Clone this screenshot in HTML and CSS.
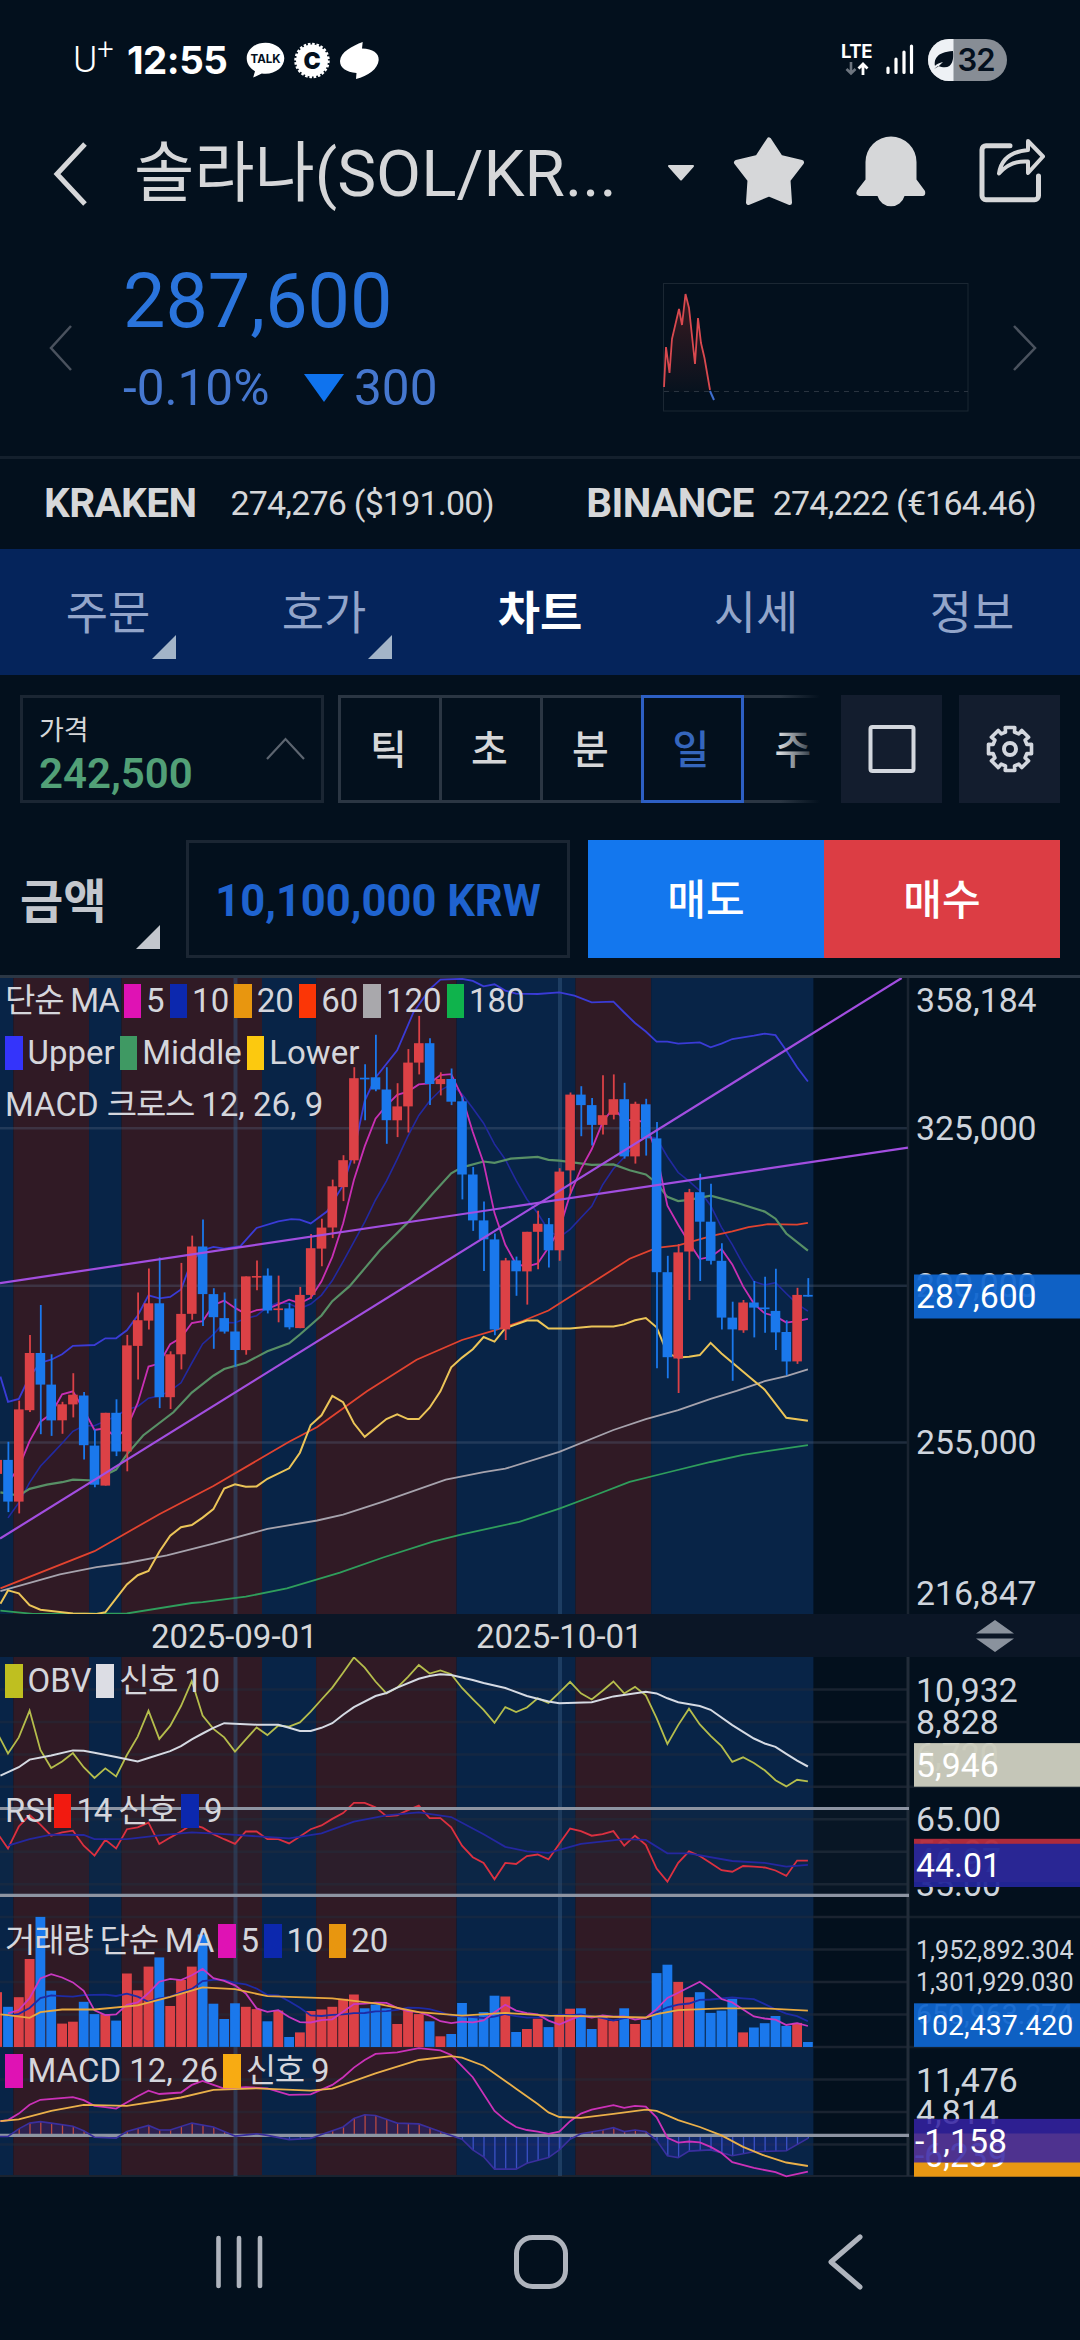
FILE: index.html
```html
<!DOCTYPE html>
<html lang="ko">
<head>
    <meta charset="UTF-8">
    <meta name="viewport" content="width=device-width, initial-scale=1.0">
    <title>솔라나(SOL/KRW) 차트</title>
    <link rel="stylesheet" href="styles.css">
</head>
<body>
    <div class="status-bar">
        <div class="status-left">
            <span class="carrier">U<sup>+</sup></span>
            <span class="clock">12:55</span>
            <svg class="status-icons" width="134" height="40" viewBox="0 0 134 40">
                <path fill="#fff" d="M19.500 2.700C9 2.700 .7 9.700 .7 18.300c0 5.500 3.300 10.200 8.300 13l-1.800 6.300 8.600-4.100c1.200.2 2.400.3 3.700.3 10.400 0 18.800-7 18.800-15.500S29.900 2.700 19.500 2.700z"/>
                <text class="talk-text" x="19.500" y="22.500">TALK</text>
                <circle cx="66" cy="20.500" r="16" fill="#fff"/>
                <circle cx="66" cy="20.500" r="16.500" fill="none" stroke="#fff" stroke-width="2.500" stroke-dasharray="2.600 1.700"/>
                <text class="coin-text" x="66" y="29">C</text>
                <path fill="#fff" d="M116.700 2L116 8.500C127 9 133 13 132.700 20C132 29 122 36 110 39L110.500 33C100 32 94 28 94 21C94.500 12 106 6 116.700 2z"/>
            </svg>
        </div>
        <div class="status-right">
            <svg width="168" height="44" viewBox="0 0 168 44">
                <text class="lte-text" x="1" y="20">LTE</text>
                <path d="M11 24v11M6.500 31l4.500 4.500 4.500-4.500" fill="none" stroke="#6d757f" stroke-width="2.600"/>
                <path d="M23 37V26M18.500 30.500l4.500-4.500 4.500 4.500" fill="none" stroke="#fff" stroke-width="2.800"/>
                <path d="M48 34.500v-4.500M56 34.500v-13.500M64 34.500V14M71.500 34.500V8" stroke="#fff" stroke-width="3.200" stroke-linecap="round"/>
                <rect x="88" y="1" width="79" height="42" rx="21" fill="#878d95"/>
                <path d="M113.500 1H109a21 21 0 0 0 0 42h4.500z" fill="#eef1f5"/>
                <path d="M94 31c4-2 6-4 9-7-5 1-7 3-8 4-1-6 1-14 18-15 1 10-1 20-15 15z" fill="#04101d"/>
                <text class="battery-text" x="117.500" y="33">32</text>
            </svg>
        </div>
    </div>

    <div class="header">
        <svg class="back" width="35" height="66" viewBox="0 0 35 66">
            <path d="M32 3L4 33l28 30" fill="none" stroke="#d6d7d9" stroke-width="5"/>
        </svg>
        <h1>솔라나(SOL/KR...</h1>
        <svg class="header-icons" width="390" height="80" viewBox="0 0 390 80">
            <path d="M3 28h24L15 41.500z" transform="translate(1 4)" fill="#d6d7d9" stroke="#d6d7d9" stroke-width="2" stroke-linejoin="round"/>
            <path d="M103.500 3l11.500 17.500 21 5-13.500 17.500 1.500 22.500-20.500-8.500-20.500 8.500L84.500 43 71 25.500l21-5z" transform="translate(.5 3)" fill="#d6d7d9" stroke="#d6d7d9" stroke-width="5" stroke-linejoin="round"/>
            <path d="M200 53.500V25a25 25 0 0 1 51 0v17.500l8.500 11.500q1 4.500-2 5h-18.500a14 14 0 0 1-27 0h-18q-4.500-1-2.500-5.500l8.500-11z" transform="translate(.5 3)" fill="#d6d7d9"/>
            <path d="M344 8.700h-24a4 4 0 0 0-4 4v46a4 4 0 0 0 4 4h48.500a4 4 0 0 0 4-4V39" transform="translate(1 3)" fill="none" stroke="#d6d7d9" stroke-width="5" stroke-linecap="round"/>
            <path d="M362 4l15 15.500-15 16.500v-11.500c-13-1-22 4-29 12 2-14 12-22 29-23.500z" transform="translate(1 3)" fill="none" stroke="#d6d7d9" stroke-width="4" stroke-linejoin="round"/>
        </svg>
    </div>

    <div class="summary">
        <svg class="prev" width="24" height="46" viewBox="0 0 24 46"><path d="M22 1L2 23l20 22" fill="none" stroke="#4a525e" stroke-width="2.500"/></svg>
        <div class="price">
            <div class="price-now">287,600</div>
            <div class="price-change">
                <span class="rate">-0.10%</span>
                <svg width="40" height="30" viewBox="0 0 40 30"><path d="M0 1h40L20 29z" fill="#0f73ee"/></svg>
                <span>300</span>
            </div>
        </div>
        <svg class="mini" width="306" height="129" viewBox="0 0 306 129">
            <defs>
                <linearGradient id="miniFill" x1="0" y1="0" x2="0" y2="1">
                    <stop offset="0" stop-color="#3a1a20"/>
                    <stop offset="1" stop-color="#07121e"/>
                </linearGradient>
            </defs>
            <path d="M1 109V100L3 64l4 27 3-35 6.500-30 3 17L22.500 11l4 14 5.500 57 3-47 3 25 4 18 5 31z" fill="url(#miniFill)"/>
            <rect x=".5" y=".5" width="304.500" height="127.500" fill="none" stroke="#1b2733"/>
            <path d="M1 108.500h304" stroke="#2a3440" stroke-width="1.200" stroke-dasharray="5 5"/>
            <path d="M1 104L3 64l3.500 26L9 56l7-30 3 16 3.500-31 3.500 14 6 56 3-46 3 25 3.500 15 5.500 32" fill="none" stroke="#d9494f" stroke-width="1.800"/>
            <path d="M47 108l4 9" stroke="#3f6fd0" stroke-width="2"/>
        </svg>
        <svg class="next" width="24" height="46" viewBox="0 0 24 46"><path d="M1 1l21 22L1 45" fill="none" stroke="#4a525e" stroke-width="2.500"/></svg>
    </div>

    <div class="exchanges">
        <div class="exchange"><b>KRAKEN</b><span>274,276 ($191.00)</span></div>
        <div class="exchange"><b>BINANCE</b><span>274,222 (€164.46)</span></div>
    </div>

    <div class="tabs">
        <div class="tab more">주문</div>
        <div class="tab more">호가</div>
        <div class="tab active">차트</div>
        <div class="tab">시세</div>
        <div class="tab">정보</div>
    </div>

    <div class="controls">
        <div class="price-box">
            <div>
                <div class="price-label">가격</div>
                <div class="price-value">242,500</div>
            </div>
            <svg width="40" height="24" viewBox="0 0 40 24"><path d="M1 22L19.500 2 38 22" fill="none" stroke="#5d6570" stroke-width="2.200"/></svg>
        </div>
        <div class="periods">
            <div class="period">틱</div>
            <div class="period">초</div>
            <div class="period">분</div>
            <div class="period selected">일</div>
            <div class="period last">주</div>
        </div>
        <div class="tool">
            <svg width="48" height="48" viewBox="0 0 48 48"><rect x="2.500" y="2" width="43" height="44" rx="2" fill="none" stroke="#d3d7de" stroke-width="4"/></svg>
        </div>
        <div class="tool">
            <svg width="48" height="48" viewBox="0 0 48 48" fill="none" stroke="#d3d7de" stroke-width="3.600" stroke-linejoin="round">
                <path id="gear"/>
                <circle cx="24" cy="24" r="6" stroke-width="4"/>
            </svg>
        </div>
    </div>

    <div class="order">
        <div class="amount-label">금액</div>
        <div class="amount">10,100,000 KRW</div>
        <div class="sell">매도</div>
        <div class="buy">매수</div>
    </div>

    <div class="chart-area">
        <svg id="mainChart" width="1080" height="636"></svg>
        <div class="legend main-legend">
            <div class="legend-row"><span class="kr">단순 MA</span><i class="c-pink"></i>5<i class="c-blue"></i>10<i class="c-orange"></i>20<i class="c-red"></i>60<i class="c-gray"></i>120<i class="c-green"></i>180</div>
            <div class="legend-row"><i class="c-upper"></i>Upper<i class="c-middle"></i>Middle<i class="c-yellow"></i>Lower</div>
            <div class="legend-row"><span>MACD <span class="kr">크로스 </span>12, 26, 9</span></div>
        </div>
    </div>

    <div class="date-bar">
        <span class="date">2025-09-01</span>
        <span class="date">2025-10-01</span>
        <svg width="40" height="34" viewBox="0 0 40 34"><path d="M20 1l19 13.500H1zM20 33L1 19.500h38z" fill="#8a929d"/></svg>
    </div>

    <div class="chart-area">
        <svg id="subChart" width="1080" height="521"></svg>
        <div class="legend sub-legend">
            <div class="legend-row"><i class="c-olive"></i>OBV<i class="c-white"></i><span class="kr">신호 10</span></div>
            <div class="legend-row">RSI<i class="c-rsi"></i><span class="kr">14 신호</span><i class="c-blue"></i>9</div>
            <div class="legend-row"><span class="kr">거래량 단순 MA</span><i class="c-pink"></i>5<i class="c-blue"></i>10<i class="c-orange"></i>20</div>
            <div class="legend-row"><i class="c-pink"></i>MACD 12, 26<i class="c-amber"></i><span class="kr">신호 9</span></div>
        </div>
    </div>

    <div class="nav-bar">
        <svg width="50" height="54" viewBox="0 0 50 54"><path d="M4.500 3v48M25 3v48M46 3v48" stroke="#afb4bd" stroke-width="4.600" stroke-linecap="round"/></svg>
        <svg width="56" height="56" viewBox="0 0 56 56"><rect x="3.500" y="3.500" width="49" height="49" rx="16" fill="none" stroke="#afb4bd" stroke-width="5"/></svg>
        <svg width="38" height="56" viewBox="0 0 38 56"><path d="M34 3L5 28l29 25" fill="none" stroke="#afb4bd" stroke-width="5" stroke-linecap="round" stroke-linejoin="round"/></svg>
    </div>

    <script>
        const STEP = 10.81;
        const START = 8;
        const PLOT_RIGHT = 908;
        const px = i => START + i * STEP;

        // [red?, body top, body bottom, high, low]
        const candles = [
            [0,1163,1262,1120,1287],[1,1043,1262,1022,1290],[1,909,1045,866,1049],[0,909,984,795,1102],[0,984,1069,912,1106],
            [1,1031,1069,1025,1101],[1,1008,1031,957,1062],[0,1010,1128,1002,1162],[0,1129,1222,1090,1228],[1,1051,1224,1051,1224],
            [0,1051,1143,1019,1154],[1,891,1143,866,1190],[1,831,892,765,972],[1,791,832,708,853],[0,791,1014,682,1040],
            [1,912,1014,905,1042],[1,816,912,695,948],[1,656,816,630,830],[0,656,769,592,845],[0,769,824,755,899],
            [0,826,858,765,863],[0,858,902,780,942],[1,727,902,727,913],[1,726,729,689,760],[0,725,808,708,815],
            [1,803,807,725,836],[0,803,848,790,853],[1,771,850,752,850],[1,660,771,626,780],[1,611,661,590,703],
            [1,513,611,497,636],[1,451,515,439,548],[1,256,451,230,459],[0,255,259,223,356],[0,254,283,153,287],
            [0,283,356,230,412],[1,323,356,268,396],[1,219,323,187,385],[1,173,219,108,247],[0,173,270,161,320],
            [1,258,270,242,297],[0,258,312,233,320],[0,311,485,300,544],[0,485,594,467,619],[0,594,639,549,714],
            [0,639,853,625,867],[1,689,853,683,878],[0,689,715,680,773],[1,621,715,621,794],[1,602,621,571,710],
            [0,603,665,588,706],[1,478,665,470,690],[1,295,475,290,530],[0,295,320,275,394],[0,320,367,303,416],
            [1,344,367,249,390],[1,306,343,247,354],[0,306,442,267,447],[1,317,442,312,459],[0,318,399,305,440],
            [0,399,717,360,945],[0,717,919,678,969],[1,670,922,650,1004],[1,527,668,519,783],[0,527,597,483,738],
            [0,597,690,507,699],[0,690,825,648,853],[0,825,853,787,975],[1,789,855,783,861],[0,789,801,738,872],
            [0,801,805,728,861],[0,809,860,709,902],[0,859,929,831,962],[1,771,929,754,935],[0,771,775,731,775]
        ];

        const volumes = [
            1066,1041,941,831,1024,1110,1105,1053,1085,1085,1102,979,1023,961,937,1064,996,961,877,1058,1098,1057,1066,1072,1104,
            1076,1145,1133,1077,1073,1066,1045,1034,1070,1060,1070,1111,1075,1085,1104,1143,1137,1056,1092,1080,1037,1039,1132,1124,1097,
            1119,1089,1071,1070,1124,1090,1103,1070,1111,1100,978,956,1001,1041,1028,1082,1076,1045,1133,1120,1109,1090,1116,1108,1158
        ];

        const obv = [
            404,362,292,395,442,425,403,440,468,443,464,408,360,292,366,332,280,215,305,340,362,399,367,336,356,
            331,334,323,295,263,232,193,153,180,216,247,232,204,173,195,187,197,233,262,290,324,283,296,284,260,
            272,245,217,247,263,240,216,247,230,252,312,379,330,287,328,358,385,426,414,429,448,474,490,473,477
        ];

        const rsi = [
            652,595,565,590,619,610,606,645,671,630,652,602,597,585,641,624,608,590,598,615,628,640,608,608,628,
            628,639,621,602,592,575,560,533,533,545,568,566,552,540,573,573,597,645,675,690,733,690,693,672,668,
            681,640,600,607,619,615,607,645,619,643,705,739,690,660,672,690,709,713,698,700,702,710,724,684,684
        ];

        // first / last column of every shaded band
        const bands = [[-1, .5, 0], [.5, 7.5, 1], [7.5, 10.5, 0], [10.5, 23.5, 1], [23.5, 28.5, 0], [28.5, 41.5, 1], [41.5, 52.5, 0], [52.5, 59.5, 1], [59.5, 74.5, 0]];

        const lines = {
            upper: [[-.7,965],[0,1025],[1,1018],[2,965],[3,932],[4,925],[5,912],[6,892],[8,890],[9,874],[10,874],[11,855],[12,820],[13,772],[14,779],[15,776],[16,758],[17,690],[18,665],[19,657],[20,661],[21.5,655],[23,612],[25,596],[26.2,591],[27,592],[28,601],[29.5,573],[31,510],[32,430],[33,310],[34,255],[36,190],[37.5,100],[39,45],[40,22],[42,20],[43,25],[44,38],[45,33],[46,48],[47,55],[49,56],[51,52],[52.4,60],[54,76],[56,74],[57,100],[58,125],[59,145],[60,169],[61,169],[62,174],[64,171],[65,183],[66,174],[67,163],[69,155],[70,150],[71,154],[72,190],[73,230],[74,264]],
            middle: [[-.7,1240],[1,1248],[2,1232],[3.600,1222],[5,1216],[6,1210],[8,1212],[10,1186],[11,1150],[12.500,1105],[15.300,1050],[17,1003],[19,963],[20,947],[22,932],[24,905],[26,886],[27,865],[29,820],[30,786],[31.600,750],[33,708],[34.400,665],[36.900,601],[39.300,530],[41,482],[42,468],[44,454],[45,457],[46.500,447],[49,443],[50,450],[51,452],[54,462],[56,461],[57.500,475],[59,485],[60,505],[61,538],[62,548],[63,545],[65,535],[67.400,552],[70,573],[71,590],[72,625],[74,666]],
            lower: [[-.7,1505],[0,1473],[1,1480],[2,1508],[3,1519],[6,1528],[8.200,1529],[9,1525],[11,1459],[12,1437],[13,1427],[14,1381],[15,1343],[16,1323],[17,1318],[18,1300],[19,1280],[20,1231],[21,1221],[22,1227],[23,1226],[24,1208],[26,1183],[27,1146],[28,1080],[29,1057],[30,1011],[31,1026],[32,1076],[33,1108],[35,1066],[36,1055],[37,1066],[38,1066],[39,1039],[40,1000],[41,943],[42,920],[43,900],[44,871],[45,882],[46,850],[48,832],[49,832],[50,851],[52,851],[54,846],[56,846],[57,841],[58,831],[59,826],[60,848],[61,910],[62,920],[63,918],[64,914],[65,885],[66,910],[69,975],[70,996],[72,1063],[74,1070]],
            ma60: [[-.7,1468],[8,1380],[14,1292],[19,1225],[26,1120],[28.600,1085],[33.200,1000],[37.800,925],[42,878],[45,855],[47.600,833],[50,808],[54,743],[57.500,685],[60,659],[62,653],[65.200,630],[67,620],[68.500,610],[70.300,603],[73,604],[74,600]],
            ma120: [[-.7,1475],[4.800,1435],[8.200,1418],[11,1408],[14.700,1390],[19,1362],[24,1327],[28.600,1307],[31,1293],[34.700,1262],[40.500,1210],[44,1192],[46,1184],[51,1144],[56,1092],[59,1066],[62,1045],[65,1018],[67.400,999],[70,976],[72,964],[74,948]],
            ma180: [[-.7,1521],[2.300,1529],[11,1528],[17,1503],[18,1501],[22,1488],[25.800,1468],[30.700,1431],[34.700,1395],[39.300,1357],[42,1340],[47.300,1310],[51,1279],[54,1250],[57.500,1215],[61,1193],[65,1168],[68,1151],[71,1139],[74,1128]],
            obvSignal: [[-.7,462],[1,440],[2,420],[4,409],[6,396],[7,397],[8,402],[10,413],[12,425],[13,416],[15,398],[16,385],[17,367],[18,352],[19,337],[20,325],[23,329],[25,329],[26,337],[27,345],[28,345],[29,337],[30,325],[31,303],[32,283],[34,254],[35,246],[36,232],[38,209],[39,202],[40,197],[41,199],[43,212],[44,220],[46,233],[48,254],[50,268],[51,273],[54,270],[56,255],[59,243],[60,247],[61,260],[62,270],[64,280],[65,290],[67,330],[69,365],[70,378],[71,387],[72,405],[73,423],[74,438]],
            rsiSignal: [[0,645],[2,628],[4,616],[7,617],[8,628],[11,628],[14,618],[17,610],[20,615],[26,626],[29,613],[32,582],[35,566],[38,558],[41,570],[44,615],[46,648],[48,660],[50,664],[53,640],[57,628],[59,630],[61,665],[63,665],[67,685],[70,690],[72,700],[74,695]],
            vol20: [[-.7,1086],[0,1088],[2,1095],[3,1080],[5,1073],[8,1073],[12,1062],[15,1040],[18,1015],[21,1020],[24,1038],[30,1044],[34,1057],[38,1080],[42,1089],[46,1082],[50,1089],[54,1091],[59,1094],[60,1085],[62,1075],[66,1070],[70,1070],[74,1076]],
            macd: [[-.7,1365],[0,1362],[1,1345],[2,1322],[3,1309],[6,1302],[7,1310],[8,1325],[9,1328],[10,1332],[12,1300],[13,1285],[14,1294],[16,1290],[17,1270],[18,1260],[19,1270],[20,1280],[22,1276],[24,1279],[26,1296],[28,1295],[30,1270],[31,1250],[32,1225],[33,1205],[34,1189],[36,1185],[38,1174],[40,1180],[41,1192],[43,1250],[45,1338],[46,1362],[47,1380],[48,1388],[49,1392],[50,1398],[51,1392],[52,1365],[53,1345],[54,1335],[56,1323],[57,1330],[58,1325],[59,1327],[60,1355],[61,1408],[62,1421],[63,1418],[64,1420],[65,1432],[66,1448],[67,1472],[69,1487],[71,1498],[72,1509],[74,1497]],
            macdSignal: [[-.7,1365],[1,1360],[4,1338],[7,1322],[11,1325],[16,1303],[19,1283],[23,1279],[28,1285],[30,1280],[34,1240],[38,1205],[41,1195],[42,1199],[44,1220],[47,1280],[49,1320],[50,1342],[51,1354],[53,1356],[56,1346],[59,1335],[60,1338],[62,1362],[64,1380],[66,1402],[68,1432],[70,1455],[72,1473],[74,1482]],
            hist: [[-1,1405],[0,1405],[1,1385],[2,1370],[3,1366],[4,1370],[6,1378],[7,1390],[8,1407],[10,1409],[11,1392],[13,1376],[14,1388],[15,1388],[17,1370],[19,1380],[20,1392],[21,1404],[23,1398],[24,1402],[26,1413],[28,1410],[29,1400],[31,1380],[32,1358],[33,1348],[34,1350],[35,1360],[36,1370],[38,1372],[39,1382],[41,1402],[42,1412],[43,1440],[44,1458],[45,1490],[47,1490],[48,1475],[50,1460],[51,1440],[52,1412],[53,1398],[55,1388],[56,1382],[57,1392],[58,1388],[59,1392],[60,1415],[61,1455],[62,1460],[63,1443],[65,1440],[67,1455],[69,1445],[72,1442],[74,1410]]
        };

        const RED = '#dc4146';
        const BLUE = '#1a78ec';

        const rect = (x, y, w, h, fill, extra = '') => `<rect x="${x.toFixed(1)}" y="${y.toFixed(1)}" width="${w.toFixed(1)}" height="${h.toFixed(1)}" fill="${fill}" ${extra}/>`;
        const seg = (x1, y1, x2, y2, color, w = 2) => `<path d="M${x1.toFixed(1)} ${y1.toFixed(1)}L${x2.toFixed(1)} ${y2.toFixed(1)}" stroke="${color}" stroke-width="${w}"/>`;
        const label = (text, x, y, cls = '') => `<text class="axis ${cls}" x="${x}" y="${y.toFixed(1)}">${text}</text>`;
        const byIndex = arr => arr.map((v, i) => [i, v]);

        function line(points, y, color, w = 1.8) {
            const d = points.map(p => px(p[0]).toFixed(1) + ',' + y(p[1]).toFixed(1)).join(' ');
            return `<polyline points="${d}" fill="none" stroke="${color}" stroke-width="${w}"/>`;
        }

        // moving average, "before" holds the values left of the first column
        function average(values, n, before) {
            const all = before.concat(values);
            return values.map((v, i) => {
                const end = i + before.length + 1;
                return [i, all.slice(end - n, end).reduce((a, b) => a + b, 0) / n];
            });
        }

        function drawBands(height) {
            return bands.map(b => rect(px(b[0]), 0, (b[1] - b[0]) * STEP, height, b[2] ? '#301a25' : '#082447')).join('');
        }

        function drawMain() {
            const y = v => (v - 18) / 2.376;
            let out = drawBands(636);
            [375, 749, 1122].forEach(v => out += seg(0, y(v), PLOT_RIGHT, y(v), 'rgba(90,105,130,.32)', 2.5));
            [235.500, 560].forEach(x => out += seg(x, 0, x, 636, 'rgba(50,85,125,.5)', 4));
            out += seg(PLOT_RIGHT, 0, PLOT_RIGHT, 636, '#1a2431', 2.5);

            const closes = candles.map(c => c[0] ? c[1] : c[2]);
            out += line(average(closes, 10, [1400,1390,1370,1340,1310,1290,1262,1220,1163]), y, '#2229a0', 1.6);
            out += line(lines.ma180, y, '#2f9e5c');
            out += line(lines.ma120, y, '#a6a3ad');
            out += line(lines.ma60, y, '#e2432f');
            out += line(lines.upper, y, '#3a3bd6');
            out += line(lines.middle, y, '#589066', 2.2);
            out += line(lines.lower, y, '#ecc558', 2);
            out += line(average(closes, 5, [1230,1220,1215,1163]), y, '#c92fb4');

            out += rect(0, y(1163), 2, 14, RED);
            candles.forEach((c, i) => {
                const color = c[0] ? RED : BLUE;
                out += seg(px(i) + .4, y(c[3]), px(i) + .4, y(c[4]), color, 1.8);
                out += rect(px(i) - 4.800, y(c[1]), 9.600, Math.max(1.600, y(c[2]) - y(c[1])), color);
            });

            out += seg(0, y(743), PLOT_RIGHT, y(421), '#a24ee0', 2.2);
            out += seg(0, y(1350), 901.700, y(18), '#a24ee0', 2.2);

            out += label('358,184', 916, 34);
            out += label('325,000', 916, 161.500);
            out += label('290,000', 916, 319);
            out += label('255,000', 916, 476);
            out += label('216,847', 916, 626.500);
            out += rect(914, 296.500, 166, 44, '#1066d0', 'opacity=".94"');
            out += label('287,600', 916, 329.500, 'on');
            document.getElementById('mainChart').innerHTML = out;
        }

        function drawSub() {
            const y = v => (v - 152) / 2.613;
            const bottom = y(1508);
            let out = drawBands(bottom);
            [237,322,407,491,576,661,746,831,916,1001,1086,1171,1256,1341,1426].forEach(v => {
                out += seg(0, y(v), 813, y(v), 'rgba(35,45,60,.45)', 2.5);
                out += seg(813, y(v), PLOT_RIGHT, y(v), '#1a2330', 2.5);
            });
            [491, 831, 1171].forEach(v => out += seg(PLOT_RIGHT, y(v), 1080, y(v), '#15202c', 2.5));
            out += seg(0, bottom, 1080, bottom, '#1a2330', 2);
            [235.500, 560].forEach(x => out += seg(x, 0, x, bottom, 'rgba(50,85,125,.5)', 4));
            out += seg(PLOT_RIGHT, 0, PLOT_RIGHT, bottom, '#222c39', 3);

            out += line([[-1,350]].concat(byIndex(obv)), y, '#b5bd4c');
            out += line(lines.obvSignal, y, '#d5dae3', 2);

            out += rect(0, y(548), PLOT_RIGHT, y(775) - y(548), 'rgba(30,50,70,.2)');
            out += line([[-1,612]].concat(byIndex(rsi)), y, '#dc3040');
            out += line(lines.rsiSignal, y, '#2427a0');
            [548, 775].forEach(v => out += seg(0, y(v), 909, y(v), '#8d94a2', 3.2));

            out += rect(0, y(1028), 2, y(1171) - y(1028), RED);
            volumes.forEach((v, i) => out += rect(px(i) - 4.900, y(v), 9.800, y(1171) - y(v), candles[i][0] ? RED : BLUE));
            out += line(average(volumes, 10, Array(9).fill(1092)), y, '#1d2ba6');
            out += line(average(volumes, 5, [1085,1095,1090,1080]), y, '#c938c0');
            out += line(lines.vol20, y, '#e8a83f');

            // macd histogram: filled outline plus one thin bar for each column
            const zero = y(1402);
            const outline = lines.hist.map(p => px(p[0]).toFixed(1) + ',' + y(p[1]).toFixed(1)).join(' ');
            out += `<polygon points="${px(-1)},${zero} ${outline} ${px(74)},${zero}" fill="rgba(40,50,190,.28)"/>`;
            for (let i = 0; i < 75; i++) {
                const next = lines.hist.findIndex(p => p[0] >= i);
                const a = lines.hist[Math.max(0, next - 1)];
                const b = lines.hist[next];
                const v = a[1] + (b[1] - a[1]) * (i - a[0]) / (b[0] - a[0]);
                if (Math.abs(v - 1402) > 5) {
                    out += seg(px(i) + .4, zero, px(i) + .4, y(v), v < 1402 ? '#b94842' : '#3a50c4', 1.3);
                }
            }
            out += seg(0, zero, 909, zero, '#8d94a2', 3.2);
            out += line(lines.hist, y, '#3a2f9e', 1.6);
            out += line(lines.macd, y, '#cb31b8');
            out += line(lines.macdSignal, y, '#eab04a');

            out += label('10,932', 916, y(237) + 12);
            out += label('8,828', 916, y(322) + 12);
            out += label('6,720', 916, y(407) + 12);
            out += rect(914, y(377), 166, y(491) - y(377), '#cbccbd', 'opacity=".97"');
            out += label('5,946', 916, y(434) + 12, 'on');

            out += label('65.00', 916, y(576) + 12);
            out += label('50.00', 916, y(661) + 12);
            out += label('35.00', 916, y(746) + 12);
            out += rect(914, y(627), 166, y(740) - y(627), '#b52d3d', 'opacity=".96"');
            out += label('46.97', 916, y(683) + 12);
            out += rect(914, y(640), 166, y(753) - y(640), '#222699', 'opacity=".95"');
            out += label('44.01', 916, y(696) + 12, 'on');

            out += label('1,952,892.304', 916, y(915) + 9.500, 'vol');
            out += label('1,301,929.030', 916, y(1001) + 9.500, 'vol');
            out += label('650,963.274', 916, y(1086) + 9.500, 'vol-now');
            out += rect(914, y(1057), 166, y(1171) - y(1057), '#0f66d0', 'opacity=".93"');
            out += label('102,437.420', 916, y(1112) + 10.500, 'vol-now on');

            out += label('11,476', 916, y(1256) + 12);
            out += label('4,814', 916, y(1341) + 12);
            out += label('-1,848', 915, y(1426) + 12);
            out += rect(914, y(1397), 166, y(1510) - y(1397), '#e89713');
            out += label('-6,239', 915, y(1453) + 12, 'on');
            out += rect(914, y(1359), 166, y(1473) - y(1359), '#3422a4', 'opacity=".86"');
            out += label('-1,158', 915, y(1416) + 12, 'on');
            document.getElementById('subChart').innerHTML = out;
        }

        function gearPath() {
            let d = '';
            for (let k = 0; k < 8; k++) {
                const a = k * Math.PI / 4 - Math.PI / 2;
                [[-.26, 17.500], [-.22, 22], [.22, 22], [.26, 17.500]].forEach(p => {
                    d += (d ? 'L' : 'M') + (24 + p[1] * Math.cos(a + p[0])).toFixed(1) + ' ' + (24 + p[1] * Math.sin(a + p[0])).toFixed(1);
                });
            }
            return d + 'z';
        }

        document.getElementById('gear').setAttribute('d', gearPath());
        drawMain();
        drawSub();
    </script>
</body>
</html>
```
FILE: styles.css
```css
* {
    box-sizing: border-box;
}

body {
    margin: 0;
    width: 1080px;
    height: 2340px;
    overflow: hidden;
    background: #03101d;
    color: #d6d7d9;
    font-family: Roboto, 'Noto Sans CJK KR', sans-serif;
}

svg {
    display: block;
    flex: none;
}

/* status bar */
.status-bar {
    display: flex;
    justify-content: space-between;
    align-items: center;
    height: 120px;
    padding: 0 72px 0 73px;
    color: #fff;
}

.status-left,
.status-right {
    display: flex;
    align-items: center;
}

.carrier {
    width: 54px;
    font-size: 37px;
    font-weight: 300;
    line-height: 40px;
}

.carrier sup {
    font-size: 29px;
    line-height: 0;
}

.clock {
    width: 119px;
    font-family: Inter, sans-serif;
    font-size: 38.5px;
    font-weight: 700;
    letter-spacing: -0.5px;
}

.talk-text,
.coin-text,
.lte-text,
.battery-text {
    font-family: Inter, sans-serif;
    font-weight: 700;
}

.talk-text {
    font-size: 11.5px;
    text-anchor: middle;
    fill: #04101d;
}

.coin-text {
    font-size: 23px;
    font-weight: 900;
    text-anchor: middle;
    fill: #04101d;
}

.lte-text {
    font-size: 18.5px;
    letter-spacing: -0.5px;
    fill: #fff;
}

.battery-text {
    font-size: 31px;
    font-weight: 600;
    letter-spacing: -1px;
    fill: #04101d;
}

/* header */
.header {
    display: flex;
    align-items: center;
    height: 108px;
    padding-left: 53px;
}

h1 {
    width: 531px;
    margin: 0 0 0 46px;
    font-size: 65.5px;
    font-weight: 400;
    line-height: 100px;
    white-space: nowrap;
}

/* current price */
.summary {
    display: flex;
    height: 231px;
    padding: 0 43px 0 49px;
    border-bottom: 3px solid #14202d;
}

.prev,
.next {
    margin-top: 97px;
}

.price {
    width: 540px;
    margin-left: 50px;
    color: #2a74dc;
}

.price-now {
    margin-top: 30px;
    font-size: 75.5px;
    line-height: 86px;
}

.price-change {
    display: flex;
    align-items: center;
    height: 60px;
    margin-top: 14px;
    font-size: 49.5px;
    color: #4577cf;
}

.rate {
    width: 181px;
}

.price-change svg {
    margin-right: 10px;
}

.mini {
    margin-top: 55px;
}

.next {
    margin-left: 44px;
}

/* other exchanges */
.exchanges {
    display: flex;
    justify-content: space-between;
    align-items: center;
    height: 90px;
    padding: 0 44px 2px;
}

.exchange {
    display: flex;
    align-items: center;
}

.exchange b {
    font-size: 40.5px;
    font-weight: 700;
    letter-spacing: -0.6px;
}

.exchange span {
    margin-left: 34px;
    font-size: 34px;
    letter-spacing: -0.8px;
}

.exchange:last-child span {
    margin-left: 19px;
}

/* tabs */
.tabs {
    display: grid;
    grid-template-columns: repeat(5, 1fr);
    height: 126px;
    background: #05245b;
}

.tab {
    position: relative;
    font-size: 46px;
    line-height: 128px;
    text-align: center;
    color: #93a5ca;
}

.tab.active {
    font-weight: 700;
    color: #fff;
}

.tab.more::after,
.amount-label::after {
    content: '';
    position: absolute;
    right: 40px;
    bottom: 18px;
    width: 24px;
    height: 24px;
    background: #a3b4c8;
    clip-path: polygon(100% 0, 100% 100%, 0 100%);
}

/* chart controls */
.controls {
    display: flex;
    padding: 20px 20px 0;
}

.price-box {
    display: flex;
    justify-content: space-between;
    width: 304px;
    height: 108px;
    padding: 0 15px 0 16px;
    border: 3px solid #1b2633;
}

.price-box svg {
    margin-top: 39px;
}

.price-label {
    margin-top: 15px;
    font-size: 27px;
    line-height: 36px;
}

.price-value {
    margin-top: 3px;
    font-size: 42px;
    font-weight: 600;
    line-height: 44px;
    color: #52a077;
}

.periods {
    position: relative;
    display: flex;
    width: 482px;
    height: 108px;
    margin: 0 21px 0 14px;
    overflow: hidden;
}

.periods::after {
    content: '';
    position: absolute;
    top: 0;
    right: 0;
    width: 40px;
    height: 108px;
    background: linear-gradient(to right, rgba(3,16,29,0), #03101d);
}

.period {
    flex: none;
    width: 101px;
    padding-right: 3px;
    border: solid #2b3643;
    border-width: 3px 0 3px 3px;
    font-size: 40px;
    font-weight: 500;
    line-height: 105px;
    text-align: center;
}

.period.selected {
    width: 103px;
    border: 3px solid #2d5fc4;
    color: #3566bd;
}

.period.last {
    border-left: none;
}

.tool {
    display: flex;
    align-items: center;
    justify-content: center;
    width: 101px;
    height: 108px;
    background: #131d2e;
}

.tool + .tool {
    margin-left: 17px;
}

/* order row */
.order {
    display: flex;
    height: 172px;
    padding: 37px 20px 0;
}

.amount-label {
    position: relative;
    width: 166px;
    font-size: 47px;
    font-weight: 700;
    line-height: 124px;
    color: #c3c7cd;
}

.amount-label::after {
    right: 26px;
    bottom: 26px;
    background: #c3c7cd;
}

.amount {
    width: 384px;
    height: 118px;
    margin-right: 18px;
    border: 3px solid #1b2633;
    font-size: 43.5px;
    font-weight: 700;
    line-height: 117px;
    text-align: center;
    white-space: nowrap;
    color: #1f63cf;
}

.sell,
.buy {
    width: 236px;
    height: 118px;
    font-size: 42px;
    font-weight: 500;
    line-height: 121px;
    text-align: center;
    color: #fff;
    background: #1377ee;
}

.buy {
    background: #dc3d44;
}

/* charts */
.chart-area {
    position: relative;
}

.order + .chart-area {
    border-top: 3px solid #2b3745;
}

.axis {
    font-size: 33.8px;
    fill: #cfd5dd;
}

.axis.vol {
    font-size: 25.1px;
}

.axis.vol-now {
    font-size: 28.5px;
}

.axis.on {
    fill: #fff;
}

.legend {
    position: absolute;
    top: 0;
    left: 5px;
    font-size: 33px;
    line-height: 34px;
    color: #d5d6dc;
}

.main-legend {
    top: -3px;
}

.legend-row {
    display: flex;
    align-items: center;
    height: 52px;
    white-space: pre;
}

.legend .kr {
    letter-spacing: -1.2px;
}

.sub-legend .legend-row {
    height: 129.9px;
    padding-bottom: 81px;
}

.legend i {
    width: 17.5px;
    height: 34px;
    margin: 0 5px 0 5px;
}

.legend i:first-child {
    margin-left: 0;
}

.c-pink { background: #df12b4; }
.c-blue { background: #0c28ae; }
.c-orange { background: #e8960f; }
.c-red { background: #fb3606; }
.c-gray { background: #a9a8ac; }
.c-green { background: #0fb34c; }
.c-upper { background: #3434fb; }
.c-middle { background: #3f9963; }
.c-yellow { background: #fcc90f; }
.c-olive { background: #bfbf20; }
.c-white { background: #dcdde4; }
.c-rsi { background: #f21a10; }
.c-amber { background: #f8ab12; }

.date-bar {
    display: flex;
    height: 43px;
    padding-left: 151px;
    background: #0b1626;
}

.date {
    width: 325px;
    font-size: 33px;
    line-height: 45px;
}

.date-bar svg {
    margin: 5px 0 0 174px;
}

/* system navigation */
.nav-bar {
    display: flex;
    align-items: center;
    padding: 56px 0 0 214px;
}

.nav-bar svg:nth-child(2) {
    margin-left: 249px;
}

.nav-bar svg:nth-child(3) {
    margin-left: 257px;
}
```
